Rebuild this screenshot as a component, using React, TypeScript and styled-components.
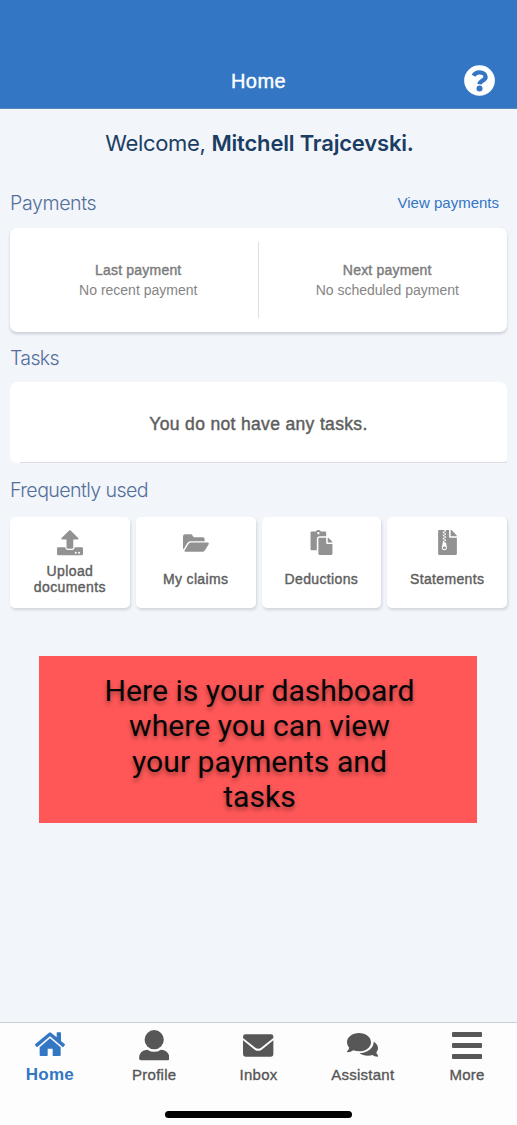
import React from "react";
import styled, { createGlobalStyle } from "styled-components";
import { FaPaste, FaFileArchive } from "react-icons/fa";

const GlobalStyle = createGlobalStyle`
  * { box-sizing: border-box; }
  body { margin: 0; background: #f2f5fa; font-family: "Liberation Sans", Arial, sans-serif; }
`;

const Screen = styled.div`
  display: flex;
  flex-direction: column;
  width: 517px;
  height: 1125px;
  overflow: hidden;
  background: #f2f5fa;
`;

const Header = styled.header`
  display: grid;
  grid-template-columns: 1fr auto 1fr;
  align-items: center;
  height: 109px;
  padding: 52px 22px 0 22px;
  background: #3276c4;
  border-bottom: 1px solid #5b87b8;
  flex: none;
`;

const Label = styled.span<{ $size: number; $color: string; $line: number; $stroke?: number; $track?: number; $bold?: boolean }>`
  font-size: ${(p) => p.$size}px;
  line-height: ${(p) => p.$line}px;
  color: ${(p) => p.$color};
  letter-spacing: ${(p) => p.$track ?? 0}px;
  font-weight: ${(p) => (p.$bold ? 700 : 400)};
  -webkit-text-stroke: ${(p) => p.$stroke ?? 0}px ${(p) => p.$color};
  text-align: center;
  white-space: pre-line;
`;

const HeaderTitle = styled.div`
  display: flex;
  padding-top: 2px;
`;

const HelpButton = styled.button`
  justify-self: end;
  display: flex;
  padding: 0;
  border: 0;
  background: none;
  color: #fff;
`;

const Main = styled.main`
  flex: 1;
  display: flex;
  flex-direction: column;
  padding: 20px 10px 0;
`;

const Welcome = styled.h1`
  margin: 0 0 34px;
  padding-left: 2px;
  font: 400 22px/28px Inter, sans-serif;
  letter-spacing: -0.34px;
  color: #1c3d63;
  text-align: center;
  white-space: nowrap;
  b { font-weight: 600; letter-spacing: -0.18px; }
`;

const SectionHead = styled.div<{ $gap: number }>`
  display: flex;
  justify-content: space-between;
  align-items: center;
  height: 24px;
  padding-right: 8px;
  margin-bottom: ${(p) => p.$gap}px;
`;

const SectionTitle = styled.h2<{ $track: number }>`
  margin: 0;
  font: 300 19.6px/24px Inter, sans-serif;
  letter-spacing: ${(p) => p.$track}px;
  color: #536f9c;
`;

const PaymentsCard = styled.section`
  display: grid;
  grid-template-columns: 1fr 1fr;
  align-items: center;
  height: 104px;
  margin-bottom: 14px;
  border-radius: 7px;
  background: #fff;
  box-shadow: 0 2px 3px rgba(60, 70, 90, 0.22);
`;

const Payment = styled.div<{ $divided?: boolean }>`
  display: flex;
  flex-direction: column;
  align-items: center;
  justify-content: center;
  height: 76px;
  padding-left: 9px;
  border-right: ${(p) => (p.$divided ? "1px solid #dedfe2" : "0")};
`;

const TasksCard = styled.section`
  display: flex;
  flex-direction: column;
  align-items: stretch;
  justify-content: center;
  height: 81px;
  margin-bottom: 15px;
  padding-top: 4px;
  border-radius: 7px;
  background: #fff;
`;

const TasksRule = styled.hr`
  width: 487px;
  height: 1px;
  margin: 0 0 0 10px;
  border: 0;
  background: #dcdee1;
`;

const TasksText = styled.div`
  flex: 1;
  display: flex;
  align-items: center;
  justify-content: center;
`;

const Shortcuts = styled.nav`
  display: grid;
  grid-template-columns: repeat(4, 1fr);
  gap: 6px;
  margin-bottom: 48px;
`;

const Shortcut = styled.a`
  display: flex;
  flex-direction: column;
  align-items: center;
  height: 91px;
  padding-top: 13px;
  border-radius: 5px;
  background: #fff;
  box-shadow: 1px 2px 3px rgba(60, 70, 90, 0.18);
`;

const ShortcutIcon = styled.span`
  display: flex;
  align-items: center;
  height: 25px;
  color: #929292;
`;

const ShortcutText = styled.span`
  display: flex;
  align-items: center;
  height: 48px;
`;

const Callout = styled.aside`
  width: 438px;
  height: 167px;
  margin-left: 29px;
  padding: 17px 60px 0 63px;
  background: #ff5757;
  color: #060606;
  font: 400 30.15px/35.3px Roboto, sans-serif;
  text-align: center;
  text-shadow: 0 3px 4px rgba(0, 0, 0, 0.36);
`;

const TabBar = styled.footer`
  display: flex;
  flex-direction: column;
  align-items: center;
  justify-content: space-between;
  height: 103px;
  padding-bottom: 7px;
  border-top: 1px solid #c9ccd1;
  background: #fdfdfd;
  flex: none;
`;

const Tabs = styled.nav`
  display: grid;
  grid-template-columns: repeat(5, 104.3px);
  justify-content: center;
  width: 517px;
`;

const Tab = styled.a<{ $active?: boolean }>`
  display: flex;
  flex-direction: column;
  align-items: center;
  padding-top: 7px;
  color: ${(p) => (p.$active ? "#3276c4" : "#575757")};
`;

const TabIcon = styled.span<{ $drop: number }>`
  display: flex;
  align-items: flex-start;
  height: 34px;
  padding-top: ${(p) => p.$drop}px;
`;

const HomeIndicator = styled.div`
  width: 187px;
  height: 7px;
  border-radius: 4px;
  background: #000;
`;

const HelpIcon = () => (
  <svg width="31" height="31" viewBox="0 0 92 92">
    <circle cx="46" cy="46" r="45.500" fill="currentColor" />
    <path d="M28.500 32C32 25 38 22 46 22c10.500 0 18 5.500 18 13.500C64 46 47 46.500 46 57" fill="none" stroke="#3276c4" strokeWidth="13" />
    <circle cx="46" cy="70" r="9" fill="#3276c4" />
  </svg>
);

const UploadIcon = () => (
  <svg width="26" height="26" viewBox="0 0 26 26" fill="currentColor">
    <path d="M12.200.4a1 1 0 0 1 1.400 0l7.600 7.700c.6.6.2 1.400-.6 1.400h-4.300v8c0 .7-.5 1.200-1.200 1.200h-4.400c-.7 0-1.200-.5-1.200-1.200v-8H5.200c-.8 0-1.200-.8-.6-1.400z" />
    <path fillRule="evenodd" d="M1.200 17.300h7.100c.1 1.600 1.100 2.700 2.600 2.700h4.200c1.500 0 2.500-1.100 2.600-2.700h7.100c.6 0 1.200.5 1.200 1.200v5.600c0 .7-.6 1.200-1.200 1.200H1.200c-.7 0-1.200-.5-1.200-1.200v-5.600c0-.7.5-1.200 1.200-1.200zM18.800 21.700a1 1 0 1 0 0 2 1 1 0 0 0 0-2zm3.300 0a1 1 0 1 0 0 2 1 1 0 0 0 0-2z" />
  </svg>
);

const FolderIcon = () => (
  <svg width="26" height="18" viewBox="0 0 78 54" fill="currentColor">
    <path d="M0 7q0-6 6-6h17q4 0 6 4l3 5h27q6 0 6 6v6H22q-6 0-9 5L2 46q-2-1-2-4z" />
    <path d="M24 25.500h50q5 0 3 5L66 49q-2 4-6 4H7q-4 0-2-4l12-19.500q3-4 7-4z" />
  </svg>
);

const HomeIcon = () => (
  <svg width="30" height="24" viewBox="0 0 90 72" fill="currentColor">
    <path d="M42 2q3-2.500 6 0l17 14V3q0-2 2-2h9q2 0 2 2v24l11 9q2 2 0 4l-3 4q-2 2-4 0L45 13 8 44q-2 2-4 0l-3-4q-2-2 0-4z" />
    <path d="M45 19l32 26.500V69q0 3-3 3H55q-2 0-2-2V50H38v20q0 2-2 2H17q-3 0-3-3V45.500z" />
  </svg>
);

const ProfileIcon = () => (
  <svg width="30.400" height="31" viewBox="0 0 91 93" fill="currentColor">
    <circle cx="45.500" cy="29" r="28.800" />
    <path d="M25 59q10 6.500 20.500 6.500T66 59q25 2 25 26 0 6-6 6H6q-6 0-6-6 0-24 25-26z" />
  </svg>
);

const EnvelopeIcon = () => (
  <svg width="30.400" height="23" viewBox="0 0 91 69" fill="currentColor">
    <path d="M0 8q0-7 7-7h77q7 0 7 7v4L53 42q-7.500 5-15 0L0 12z" />
    <path d="M0 19l35 28q10.500 7 21 0l35-28v42q0 7-7 7H7q-7 0-7-7z" />
  </svg>
);

const CommentsIcon = () => (
  <svg width="31" height="24" viewBox="0 0 93 72" fill="currentColor">
    <path d="M36 0c20 0 36 12 36 27.500S56 55 36 55c-6 0-12-1-17-3-5 4-11 5.500-17 5.500-2 0-2.500-2-1-3.500 3-3 5-6.500 5.500-10.500C2.500 39 0 33.500 0 27.500 0 12 16 0 36 0z" />
    <path d="M80 26c8 4.500 13 11 13 19 0 5-2 9.500-5 13 .8 4 2.500 6.500 4.500 8.500 2 2 1 4.500-1 4.500-6 0-11-2-15-5-4 1.500-9 2.500-14 2.500-10 0-19-3.500-25-8.500C60 60 80 46.500 80 26z" />
  </svg>
);

const MenuIcon = () => (
  <svg width="30" height="27" viewBox="0 0 30 27" fill="currentColor">
    <rect width="30" height="5" rx="1" />
    <rect y="11" width="30" height="5" rx="1" />
    <rect y="22" width="30" height="5" rx="1" />
  </svg>
);

const shortcuts = [
  { text: "Upload\ndocuments", icon: <UploadIcon />, track: 0.4 },
  { text: "My claims", icon: <FolderIcon />, track: 0.35 },
  { text: "Deductions", icon: <FaPaste size={25} />, track: 0.35 },
  { text: "Statements", icon: <FaFileArchive size={25} />, track: 0.35 },
];

const tabs = [
  { text: "Home", icon: <HomeIcon />, drop: 1.5, active: true },
  { text: "Profile", icon: <ProfileIcon />, drop: 0 },
  { text: "Inbox", icon: <EnvelopeIcon />, drop: 4 },
  { text: "Assistant", icon: <CommentsIcon />, drop: 3 },
  { text: "More", icon: <MenuIcon />, drop: 2 },
];

export default function App() {
  return (
    <Screen>
      <GlobalStyle />
      <Header>
        <span />
        <HeaderTitle><Label $size={20} $line={24} $color="#fff" $stroke={0.4} $track={0.4}>Home</Label></HeaderTitle>
        <HelpButton aria-label="Help"><HelpIcon /></HelpButton>
      </Header>
      <Main>
        <Welcome>Welcome, <b>Mitchell Trajcevski.</b></Welcome>
        <SectionHead $gap={13}>
          <SectionTitle $track={-0.4}>Payments</SectionTitle>
          <Label $size={15} $line={20} $color="#3276c4">View payments</Label>
        </SectionHead>
        <PaymentsCard>
          <Payment $divided>
            <Label $size={14} $line={20} $color="#7b7b7b" $stroke={0.4} $track={0.2}>Last payment</Label>
            <Label $size={14} $line={20} $color="#858585">No recent payment</Label>
          </Payment>
          <Payment>
            <Label $size={14} $line={20} $color="#7b7b7b" $stroke={0.4} $track={0.2}>Next payment</Label>
            <Label $size={14} $line={20} $color="#858585">No scheduled payment</Label>
          </Payment>
        </PaymentsCard>
        <SectionHead $gap={12}><SectionTitle $track={-0.7}>Tasks</SectionTitle></SectionHead>
        <TasksCard>
          <TasksText><Label $size={17.5} $line={22} $color="#5e5e5e" $stroke={0.45} $track={0.34}>You do not have any tasks.</Label></TasksText>
          <TasksRule />
        </TasksCard>
        <SectionHead $gap={15}><SectionTitle $track={-0.6}>Frequently used</SectionTitle></SectionHead>
        <Shortcuts>
          {shortcuts.map((s) => (
            <Shortcut key={s.text}>
              <ShortcutIcon>{s.icon}</ShortcutIcon>
              <ShortcutText><Label $size={14} $line={16.4} $color="#5e5e5e" $stroke={0.4} $track={s.track}>{s.text}</Label></ShortcutText>
            </Shortcut>
          ))}
        </Shortcuts>
        <Callout>Here is your dashboard where you can view your payments and tasks</Callout>
      </Main>
      <TabBar>
        <Tabs>
          {tabs.map((t) => (
            <Tab key={t.text} $active={t.active}>
              <TabIcon $drop={t.drop}>{t.icon}</TabIcon>
              <Label $size={t.active ? 17 : 15} $line={22} $color={t.active ? "#3276c4" : "#575757"} $bold={t.active} $stroke={t.active ? 0 : 0.35} $track={0.25}>{t.text}</Label>
            </Tab>
          ))}
        </Tabs>
        <HomeIndicator />
      </TabBar>
    </Screen>
  );
}
